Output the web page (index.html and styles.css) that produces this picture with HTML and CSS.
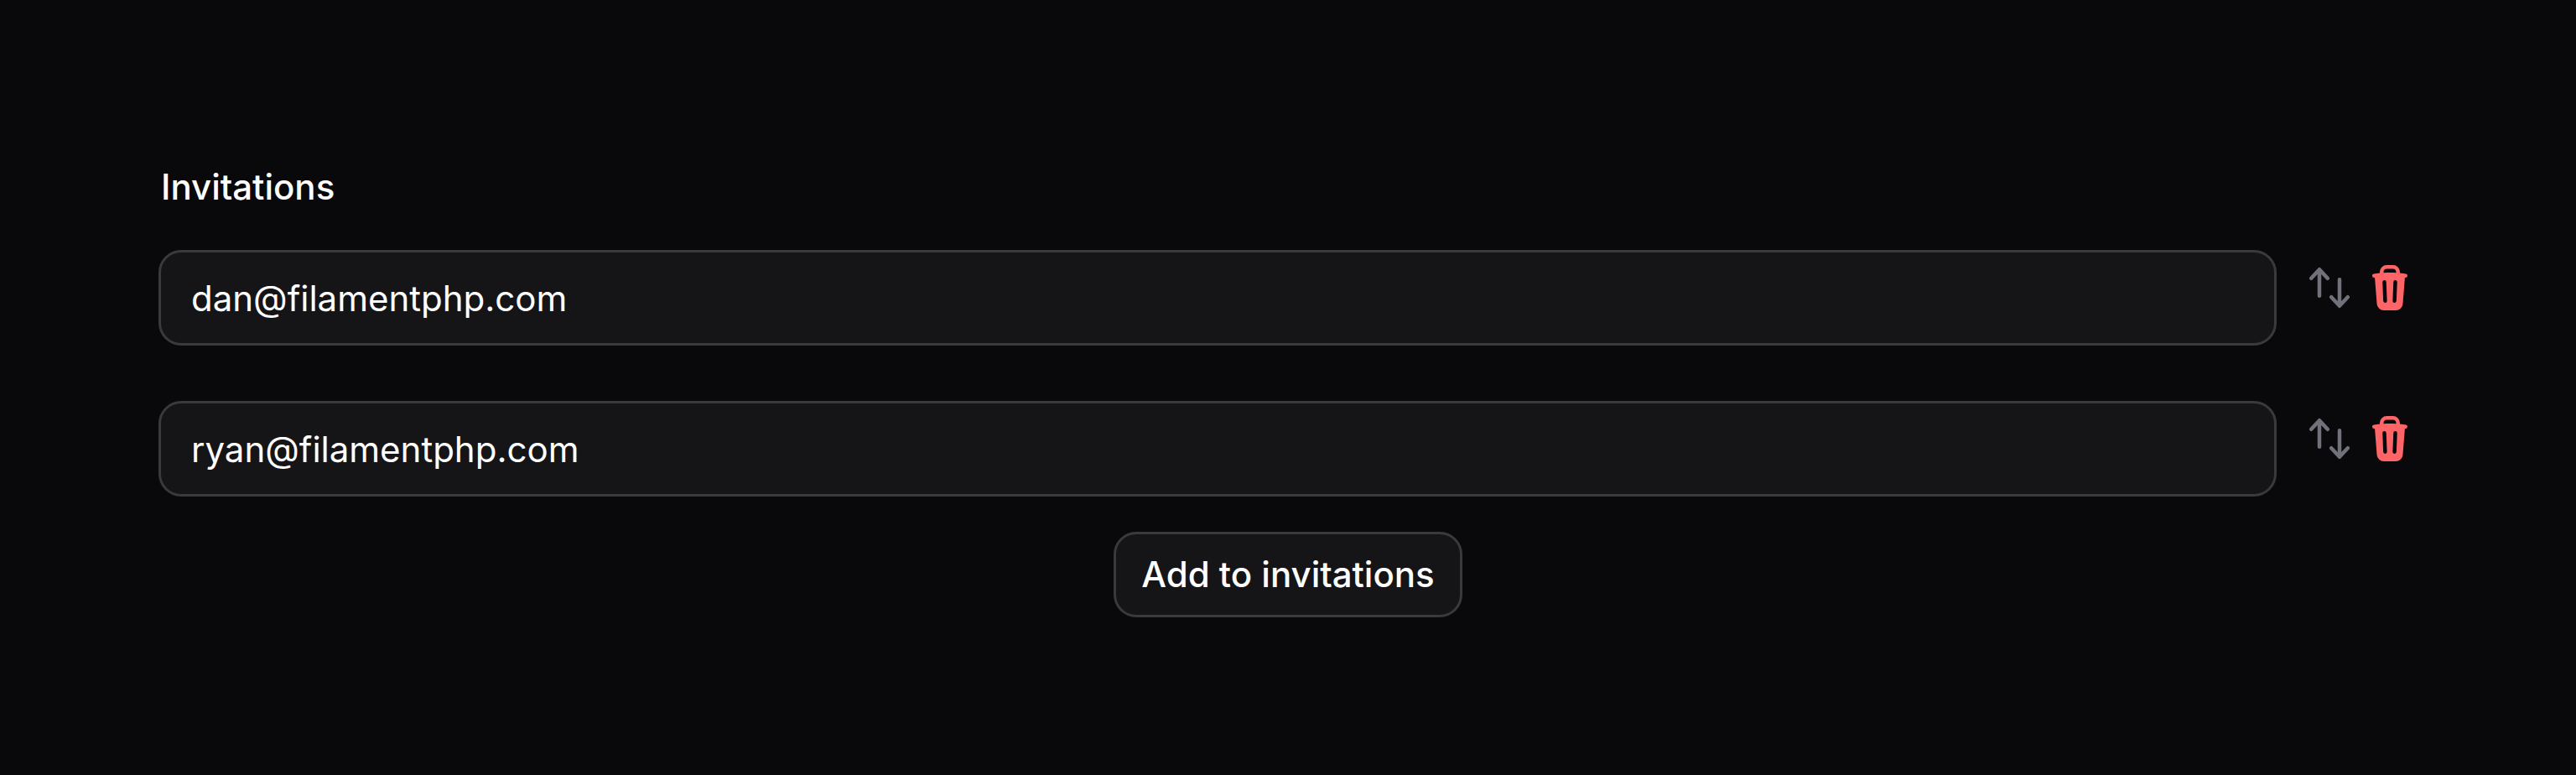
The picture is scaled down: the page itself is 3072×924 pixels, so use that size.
FILE: index.html
```
<!DOCTYPE html>
<html lang="en">
<head>
<meta charset="utf-8">
<meta name="viewport" content="width=device-width, initial-scale=1">
<title>Invitations</title>
<link rel="stylesheet" href="styles.css">
</head>
<body>
<svg class="sprite" aria-hidden="true">
  <symbol id="icon-move" viewBox="0 0 20 20"><path fill-rule="evenodd" clip-rule="evenodd" d="M2.24 6.8a.75.75 0 0 0 1.06-.04l1.95-2.1v8.59a.75.75 0 0 0 1.5 0V4.66l1.95 2.1a.75.75 0 1 0 1.1-1.02l-3.25-3.5a.75.75 0 0 0-1.1 0L2.2 5.74a.75.75 0 0 0 .04 1.06Zm8 6.4a.75.75 0 0 0-.04 1.06l3.25 3.5a.75.75 0 0 0 1.1 0l3.25-3.5a.75.75 0 1 0-1.1-1.02l-1.95 2.1V6.75a.75.75 0 0 0-1.5 0v8.59l-1.95-2.1a.75.75 0 0 0-1.06-.04Z"/></symbol>
  <symbol id="icon-trash" viewBox="0 0 20 20"><path fill-rule="evenodd" clip-rule="evenodd" d="M8.75 1A2.75 2.75 0 0 0 6 3.75v.443c-.795.077-1.584.176-2.365.298a.75.75 0 1 0 .23 1.482l.149-.022.841 10.518A2.75 2.75 0 0 0 7.596 19h4.807a2.75 2.75 0 0 0 2.742-2.53l.841-10.52.149.023a.75.75 0 0 0 .23-1.482A41.03 41.03 0 0 0 14 4.193V3.75A2.75 2.75 0 0 0 11.25 1h-2.5ZM10 4c.84 0 1.673.025 2.5.075V3.75c0-.69-.56-1.25-1.25-1.25h-2.5c-.69 0-1.25.56-1.25 1.25v.325C8.327 4.025 9.16 4 10 4ZM8.58 7.72a.75.75 0 0 0-1.5.06l.3 7.5a.75.75 0 1 0 1.5-.06l-.3-7.5Zm4.34.06a.75.75 0 1 0-1.5-.06l-.3 7.5a.75.75 0 1 0 1.5.06l.3-7.5Z"/></symbol>
</svg>
<main class="page">
  <fieldset class="repeater">
    <legend class="label">Invitations</legend>
    <ul class="items">
      <li class="item">
        <input class="input" type="email" value="dan@filamentphp.com" aria-label="Invitation 1">
        <div class="actions">
          <button class="icon-button" type="button" aria-label="Move"><svg class="icon"><use href="#icon-move"/></svg></button>
          <button class="icon-button icon-button-danger" type="button" aria-label="Delete"><svg class="icon"><use href="#icon-trash"/></svg></button>
        </div>
      </li>
      <li class="item">
        <input class="input" type="email" value="ryan@filamentphp.com" aria-label="Invitation 2">
        <div class="actions">
          <button class="icon-button" type="button" aria-label="Move"><svg class="icon"><use href="#icon-move"/></svg></button>
          <button class="icon-button icon-button-danger" type="button" aria-label="Delete"><svg class="icon"><use href="#icon-trash"/></svg></button>
        </div>
      </li>
    </ul>
    <div class="footer">
      <button class="add-button" type="button">Add to invitations</button>
    </div>
  </fieldset>
</main>
</body>
</html>
```
FILE: styles.css
```
* {
  box-sizing: border-box;
}

body {
  margin: 0;
  background: #09090b;
  color: #fff;
  font-family: Inter, "Liberation Sans", sans-serif;
  font-size: 42px;
  line-height: 72px;
}

.sprite {
  display: none;
}

.page {
  padding: 187px 189px;
}

.repeater {
  min-width: 0;
  margin: 0;
  padding: 0;
  border: 0;
}

.label {
  padding: 0 3px;
  font-weight: 500;
}

.items {
  display: grid;
  gap: 66px;
  margin: 0;
  padding: 39px 0 0;
  list-style: none;
}

.item {
  display: flex;
  align-items: flex-start;
  gap: 33px;
}

.input {
  flex: 1;
  min-width: 0;
  height: 114px;
  padding: 0 36px;
  border: 3px solid #3a3a3c;
  border-radius: 27px;
  background: #151517;
  color: inherit;
  font: inherit;
}

.actions {
  display: flex;
  gap: 12px;
  padding: 15px 3px 0 0;
}

.icon-button {
  display: block;
  padding: 0;
  border: 0;
  background: none;
  color: #71717b;
}

.icon-button-danger {
  color: #ff6467;
}

.icon {
  display: block;
  width: 60px;
  height: 60px;
  fill: currentColor;
}

.footer {
  display: flex;
  justify-content: center;
  padding-top: 42px;
}

.add-button {
  padding: 12px 30px;
  border: 3px solid #3a3a3c;
  border-radius: 27px;
  background: #151517;
  color: inherit;
  font: inherit;
  font-weight: 500;
}
```
